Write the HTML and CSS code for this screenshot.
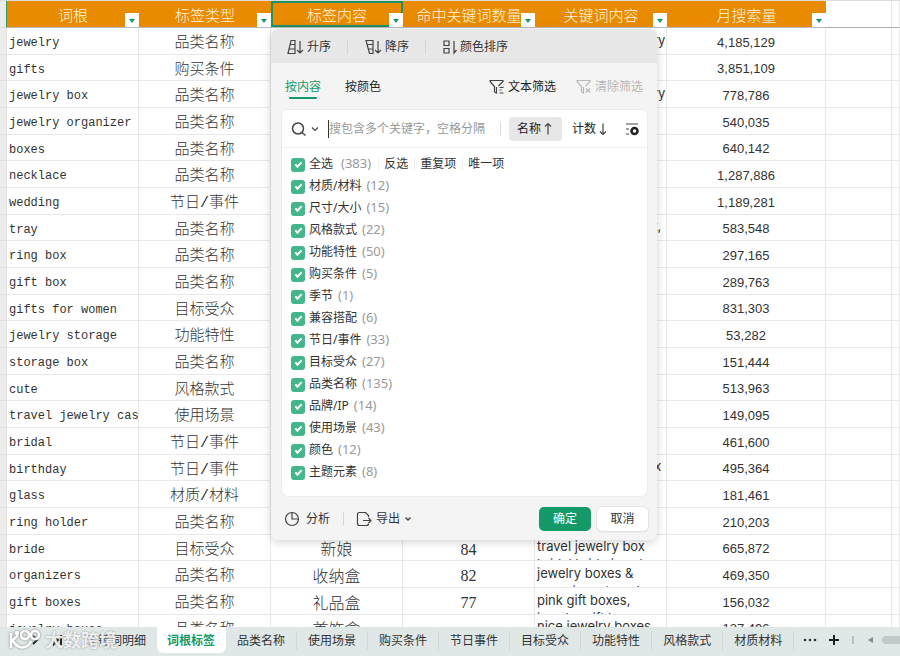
FILE: index.html
```html
<!DOCTYPE html>
<html lang="zh-CN">
<head>
    <meta charset="UTF-8">
    <meta name="viewport" content="width=device-width, initial-scale=1.0">
    <title>词根标签</title>
    <link rel="stylesheet" href="styles.css">
</head>
<body>
    <svg class="defs" width="0" height="0">
        <symbol id="funnel" viewBox="0 0 16 16">
            <path d="M1 2.5V1.5h13v1L9.5 7M1 2.5L5.5 7.500V13l2 1V8"/>
        </symbol>
    </svg>
    <div class="sheet">
        <table class="grid">
            <colgroup>
                <col class="c-gutter"><col class="c-data"><col class="c-data"><col class="c-data"><col class="c-data"><col class="c-data"><col class="c-volume"><col class="c-blank"><col>
            </colgroup>
            <thead>
                <tr>
                    <td class="gutter"></td>
                    <th>词根<button class="drop" aria-label="筛选词根"></button></th>
                    <th>标签类型<button class="drop" aria-label="筛选标签类型"></button></th>
                    <th class="selected">标签内容<button class="drop" aria-label="筛选标签内容"></button></th>
                    <th>命中关键词数量<button class="drop" aria-label="筛选命中关键词数量"></button></th>
                    <th>关键词内容<button class="drop" aria-label="筛选关键词内容"></button></th>
                    <th>月搜索量<button class="drop" aria-label="筛选月搜索量"></button></th>
                    <td></td>
                    <td></td>
                </tr>
            </thead>
            <tbody>
                <tr><td class="gutter"></td><td class="root">jewelry</td><td>品类名称</td><td></td><td></td><td class="words"><div>birthday gifts jewelry</div></td><td class="num">4,185,129</td><td></td><td></td></tr>
                <tr><td class="gutter"></td><td class="root">gifts</td><td>购买条件</td><td></td><td></td><td></td><td class="num">3,851,109</td><td></td><td></td></tr>
                <tr><td class="gutter"></td><td class="root">jewelry box</td><td>品类名称</td><td></td><td></td><td class="words"><div>birthday gifts jewelry</div></td><td class="num">778,786</td><td></td><td></td></tr>
                <tr><td class="gutter"></td><td class="root">jewelry organizer</td><td>品类名称</td><td></td><td></td><td></td><td class="num">540,035</td><td></td><td></td></tr>
                <tr><td class="gutter"></td><td class="root">boxes</td><td>品类名称</td><td></td><td></td><td></td><td class="num">640,142</td><td></td><td></td></tr>
                <tr><td class="gutter"></td><td class="root">necklace</td><td>品类名称</td><td></td><td></td><td></td><td class="num">1,287,886</td><td></td><td></td></tr>
                <tr><td class="gutter"></td><td class="root">wedding</td><td>节日/事件</td><td></td><td></td><td></td><td class="num">1,189,281</td><td></td><td></td></tr>
                <tr><td class="gutter"></td><td class="root">tray</td><td>品类名称</td><td></td><td></td><td class="words"><div>birthday jewelry set,</div></td><td class="num">583,548</td><td></td><td></td></tr>
                <tr><td class="gutter"></td><td class="root">ring box</td><td>品类名称</td><td></td><td></td><td></td><td class="num">297,165</td><td></td><td></td></tr>
                <tr><td class="gutter"></td><td class="root">gift box</td><td>品类名称</td><td></td><td></td><td></td><td class="num">289,763</td><td></td><td></td></tr>
                <tr><td class="gutter"></td><td class="root">gifts for women</td><td>目标受众</td><td></td><td></td><td></td><td class="num">831,303</td><td></td><td></td></tr>
                <tr><td class="gutter"></td><td class="root">jewelry storage</td><td>功能特性</td><td></td><td></td><td></td><td class="num">53,282</td><td></td><td></td></tr>
                <tr><td class="gutter"></td><td class="root">storage box</td><td>品类名称</td><td></td><td></td><td></td><td class="num">151,444</td><td></td><td></td></tr>
                <tr><td class="gutter"></td><td class="root">cute</td><td>风格款式</td><td></td><td></td><td></td><td class="num">513,963</td><td></td><td></td></tr>
                <tr><td class="gutter"></td><td class="root">travel jewelry case</td><td>使用场景</td><td></td><td></td><td></td><td class="num">149,095</td><td></td><td></td></tr>
                <tr><td class="gutter"></td><td class="root">bridal</td><td>节日/事件</td><td></td><td></td><td></td><td class="num">461,600</td><td></td><td></td></tr>
                <tr><td class="gutter"></td><td class="root">birthday</td><td>节日/事件</td><td></td><td></td><td class="words"><div>birthday jewelry box</div></td><td class="num">495,364</td><td></td><td></td></tr>
                <tr><td class="gutter"></td><td class="root">glass</td><td>材质/材料</td><td></td><td></td><td></td><td class="num">181,461</td><td></td><td></td></tr>
                <tr><td class="gutter"></td><td class="root">ring holder</td><td>品类名称</td><td></td><td></td><td></td><td class="num">210,203</td><td></td><td></td></tr>
                <tr><td class="gutter"></td><td class="root">bride</td><td>目标受众</td><td class="tag">新娘</td><td class="hits">84</td><td class="words"><div>travel jewelry box<br>bridal bride jewel</div></td><td class="num">665,872</td><td></td><td></td></tr>
                <tr><td class="gutter"></td><td class="root">organizers</td><td>品类名称</td><td class="tag">收纳盒</td><td class="hits">82</td><td class="words"><div>jewelry boxes &amp;<br>organizers travel</div></td><td class="num">469,350</td><td></td><td></td></tr>
                <tr><td class="gutter"></td><td class="root">gift boxes</td><td>品类名称</td><td class="tag">礼品盒</td><td class="hits">77</td><td class="words"><div>pink gift boxes,<br>jewelry gift box</div></td><td class="num">156,032</td><td></td><td></td></tr>
                <tr><td class="gutter"></td><td class="root">jewelry boxes</td><td>品类名称</td><td class="tag">首饰盒</td><td class="hits"></td><td class="words"><div>nice jewelry boxes</div></td><td class="num">137,496</td><td></td><td></td></tr>
            </tbody>
        </table>
    </div>

    <form class="panel">
        <div class="sortbar">
            <button type="button" class="tool"><svg width="17" height="16" viewBox="0 0 17 16"><path d="M4 1.500h4v13H1zM3.500 5.500h4.500M2.500 10h5.500M13 2v12M10 11l3 3 3-3"/></svg>升序</button>
            <button type="button" class="tool"><svg width="17" height="16" viewBox="0 0 17 16"><path d="M1 1.500h7v13H4.500zM2 5.500h6M3 10h5M13 2v12M10 11l3 3 3-3"/></svg>降序</button>
            <button type="button" class="tool"><svg width="14" height="16" viewBox="0 0 14 16"><path d="M1 2h5v4.500H1zM1 9.500h5V14H1zM11 2v12l2.500-3"/></svg>颜色排序</button>
        </div>
        <div class="modes">
            <button type="button" class="mode active">按内容</button>
            <button type="button" class="mode">按颜色</button>
            <button type="button" class="textfilter"><svg width="16" height="16"><use href="#funnel"/><path d="M10.500 8.500h4M10.500 11h2M10.500 14h4"/></svg>文本筛选</button>
            <button type="button" class="textfilter" disabled><svg width="16" height="16"><use href="#funnel"/><path d="M10 9.500l4 4M14 9.500l-4 4"/></svg>清除筛选</button>
        </div>
        <div class="card">
            <div class="search">
                <svg class="lens" width="16" height="16" viewBox="0 0 16 16"><circle cx="7" cy="7.500" r="5.500"/><path d="M11 11.500l3.500 3"/></svg>
                <svg class="chev" width="8" height="8" viewBox="0 0 8 8"><path d="M1 2.500l3 3 3-3"/></svg>
                <input type="text" aria-label="搜索" placeholder="搜包含多个关键字，空格分隔">
                <button type="button" class="order on">名称<svg width="8" height="14" viewBox="0 0 8 14"><path d="M4 12.500V1.500M1 4.500l3-3 3 3"/></svg></button>
                <button type="button" class="order">计数<svg width="8" height="14" viewBox="0 0 8 14"><path d="M4 1.500v11M1 9.500l3 3 3-3"/></svg></button>
                <button type="button" class="setup" aria-label="设置"><svg width="14" height="14" viewBox="0 0 14 14"><path d="M1 2h12M1 7h3M1 12h3"/><circle class="cog" cx="9.500" cy="9" r="3"/></svg></button>
            </div>
            <ul class="list">
                <li class="all"><label><input type="checkbox" checked>全选<span>(383)</span></label>
                    <button type="button">反选</button><button type="button">重复项</button><button type="button">唯一项</button></li>
                <li><label><input type="checkbox" checked>材质/材料<span>(12)</span></label></li>
                <li><label><input type="checkbox" checked>尺寸/大小<span>(15)</span></label></li>
                <li><label><input type="checkbox" checked>风格款式<span>(22)</span></label></li>
                <li><label><input type="checkbox" checked>功能特性<span>(50)</span></label></li>
                <li><label><input type="checkbox" checked>购买条件<span>(5)</span></label></li>
                <li><label><input type="checkbox" checked>季节<span>(1)</span></label></li>
                <li><label><input type="checkbox" checked>兼容搭配<span>(6)</span></label></li>
                <li><label><input type="checkbox" checked>节日/事件<span>(33)</span></label></li>
                <li><label><input type="checkbox" checked>目标受众<span>(27)</span></label></li>
                <li><label><input type="checkbox" checked>品类名称<span>(135)</span></label></li>
                <li><label><input type="checkbox" checked>品牌/IP<span>(14)</span></label></li>
                <li><label><input type="checkbox" checked>使用场景<span>(43)</span></label></li>
                <li><label><input type="checkbox" checked>颜色<span>(12)</span></label></li>
                <li><label><input type="checkbox" checked>主题元素<span>(8)</span></label></li>
            </ul>
        </div>
        <div class="actions">
            <button type="button" class="tool"><svg width="16" height="16" viewBox="0 0 16 16"><circle cx="8" cy="8" r="6.500"/><path d="M8 1.500V8h6.500"/></svg>分析</button>
            <button type="button" class="tool"><svg width="16" height="16" viewBox="0 0 16 16"><path d="M12.500 6V4.500l-3-3H3.500q-2 0-2 2v9q0 2 2 2h7q2 0 2-2M7 9.500h8M12.500 7l2.500 2.500-2.500 2.500"/></svg>导出<svg class="chev" width="8" height="8" viewBox="0 0 8 8"><path d="M1.500 2.500L4 5l2.500-2.500"/></svg></button>
            <button type="button" class="ok">确定</button>
            <button type="button" class="cancel">取消</button>
        </div>
    </form>

    <nav class="tabs">
        <div class="steps">
            <button aria-label="下一个"><svg width="8" height="12" viewBox="0 0 8 12"><path d="M2 2l4 4-4 4"/></svg></button>
            <button aria-label="最后一个"><svg width="10" height="12" viewBox="0 0 10 12"><path d="M2 2l4 4-4 4zM9 1v10"/></svg></button>
        </div>
        <a href="#">关键词明细</a>
        <a href="#" class="current">词根标签</a>
        <a href="#">品类名称</a>
        <a href="#">使用场景</a>
        <a href="#">购买条件</a>
        <a href="#">节日事件</a>
        <a href="#">目标受众</a>
        <a href="#">功能特性</a>
        <a href="#">风格款式</a>
        <a href="#">材质材料</a>
        <button class="more" aria-label="更多"><svg width="14" height="12" viewBox="0 0 14 12"><circle cx="2" cy="6" r="1.300"/><circle cx="7" cy="6" r="1.300"/><circle cx="12" cy="6" r="1.300"/></svg></button>
        <button class="add" aria-label="新建"><svg width="12" height="12" viewBox="0 0 12 12"><path d="M6 1v10M1 6h10"/></svg></button>
        <span class="grip"></span>
        <svg class="left" width="6" height="8" viewBox="0 0 6 8"><path d="M6 1v6L1 4z"/></svg>
        <span class="thumb"></span>
    </nav>

    <div class="mark">
        <svg width="34" height="22" viewBox="0 0 34 22">
            <path d="M3 4v15M4 12l6-6M5 12q5 8 12 6 5-2 6-6"/>
            <circle cx="17" cy="6" r="4"/><circle cx="27" cy="6" r="4"/><circle cx="9" cy="4" r="1"/>
        </svg>
        <span>大数跨境</span>
    </div>
</body>
</html>
```
FILE: styles.css
```css
* {
    box-sizing: border-box;
}

body {
    margin: 0;
    height: 100vh;
    display: flex;
    flex-direction: column;
    position: relative;
    overflow: hidden;
    background: #fff;
    color: #333;
    font: 12px/18px "Noto Sans", "Noto Sans CJK SC", sans-serif;
}

button {
    padding: 0;
    border: 0;
    background: none;
    color: inherit;
    font: inherit;
}

svg {
    fill: none;
    stroke: #444;
    stroke-width: 1.2;
    flex: none;
}

.defs {
    position: absolute;
}

/* spreadsheet */
.sheet {
    flex: 1;
    min-height: 0;
    overflow: hidden;
    border-top: 1px solid #ddd;
}

.grid {
    width: 100%;
    table-layout: fixed;
    border-collapse: separate;
    border-spacing: 0;
    font: 300 15px/18px "Liberation Mono", "Noto Sans CJK SC", monospace;
    text-align: center;
}

.c-gutter { width: 7px; }
.c-data { width: 132px; }
.c-volume { width: 159px; }
.c-blank { width: 66px; }

.grid tr {
    height: 27px;
}

.grid tbody tr:nth-child(3n+2) {
    height: 26px;
}

.grid td {
    padding: 6px 0 0;
    border-right: 1px solid #e8e8e8;
    border-bottom: 1px solid #e8e8e8;
    white-space: nowrap;
    overflow: hidden;
}

.grid thead td {
    border-bottom: 1px solid #aaa;
}

.grid th {
    position: relative;
    padding: 7px 0 0;
    background: #e88b00;
    border-bottom: 1px solid #bbb;
    color: #fff3dc;
    font-weight: 300;
    white-space: nowrap;
}

.grid th.selected {
    box-shadow: inset 0 0 0 2px #1f9163;
}

.grid .gutter {
    background: #ececec;
    border-color: #e0e0e0;
}

.grid thead .gutter {
    border-right: 1px solid #2b9c6c;
}

.drop {
    position: absolute;
    right: 0;
    bottom: 0;
    width: 14px;
    height: 14px;
    background: #fff;
}

.drop::after {
    content: "";
    display: block;
    margin: 1px auto 0;
    width: 0;
    border: 3px solid transparent;
    border-top: 4px solid #149a68;
    border-bottom: 0;
}

.grid .root {
    padding: 4px 0 0 2px;
    font-size: 12px;
    text-align: left;
}

.grid .tag,
.grid .hits {
    padding-top: 7px;
    font-size: 16px;
}

.grid .hits {
    padding-top: 4px;
    font-family: "Liberation Serif", serif;
}

.grid .words {
    padding: 0;
}

.grid .words div {
    height: 25px;
    padding: 2px 0 0 2px;
    overflow: hidden;
    font: 13px/18px Inter, sans-serif;
    text-align: left;
}

.grid .num {
    padding-top: 3px;
    font: 13px/18px "Liberation Sans", sans-serif;
}

/* filter panel */
.panel {
    position: absolute;
    left: 271px;
    top: 29px;
    width: 386px;
    background: #f4f4f4;
    border-radius: 8px;
    box-shadow: 0 2px 10px rgba(0, 0, 0, 0.18);
    overflow: hidden;
}

.sortbar {
    display: flex;
    align-items: center;
    height: 34px;
    padding: 2px 0 0 16px;
    background: #e7e7e7;
}

.tool {
    display: flex;
    align-items: center;
    gap: 3px;
}

.tool + .tool::before {
    content: "";
    width: 1px;
    height: 13px;
    margin: 0 14px 0 16px;
    background: #d4d4d4;
}

.modes {
    display: flex;
    align-items: center;
    height: 46px;
    padding: 2px 14px 0 14px;
    gap: 20px;
    color: #222;
}

.mode {
    position: relative;
    margin-right: 4px;
}

.mode.active {
    color: #149a68;
}

.mode.active::after {
    content: "";
    position: absolute;
    left: 4px;
    right: 4px;
    bottom: -3px;
    height: 2px;
    border-radius: 1px;
    background: #149a68;
}

.textfilter {
    display: flex;
    align-items: center;
    gap: 3px;
}

.mode + .textfilter {
    margin-left: auto;
}

.textfilter:disabled {
    color: #b8b8b8;
}

.textfilter:disabled svg {
    stroke: #b8b8b8;
}

.card {
    margin: 0 9px 0 10px;
    background: #fff;
    border: 1px solid #ececec;
    border-radius: 7px;
}

.search {
    display: flex;
    align-items: center;
    height: 38px;
    padding: 0 8px 0 9px;
    border-bottom: 1px solid #eee;
}

.lens {
    stroke-width: 1.5;
}

.search .chev {
    margin: 0 9px 0 4px;
}

.search input {
    flex: 1;
    min-width: 0;
    height: 18px;
    padding: 0;
    border: 0;
    border-left: 1px solid #333;
    outline: 0;
    font: inherit;
}

.search input::placeholder {
    color: #999;
}

.search input + .order::before {
    content: "";
    position: absolute;
    left: -9px;
    top: 5px;
    height: 14px;
    border-left: 1px solid #ddd;
}

.order {
    position: relative;
    display: flex;
    align-items: center;
    gap: 3px;
    height: 24px;
    margin-right: 10px;
    color: #222;
}

.order.on {
    margin-left: 9px;
    padding: 0 10px 0 8px;
    border-radius: 4px;
    background: #e7e7e7;
}

.setup {
    display: flex;
    margin-left: 8px;
}

.setup .cog {
    stroke: #222;
    stroke-width: 2.500;
}

.list {
    margin: 0;
    padding: 5px 9px 13px;
    list-style: none;
}

.list li {
    display: flex;
    align-items: center;
    height: 22px;
}

.list label,
.list button {
    line-height: 22px;
}

.list span {
    margin-left: 5px;
    color: #999;
    font-size: 13px;
    line-height: 18px;
}

.list .all span {
    margin-left: 8px;
}

.list input {
    appearance: none;
    width: 14px;
    height: 14px;
    margin: 0 4px 0 0;
    border-radius: 3px;
    background: #43b78b;
    vertical-align: middle;
}

.list input:checked::after {
    content: "";
    display: block;
    width: 5px;
    height: 2px;
    margin: 4px 0 0 4px;
    border: solid #fff;
    border-width: 0 0 2px 2px;
    transform: rotate(-45deg);
}

.list button {
    display: flex;
    align-items: center;
}

.list button::before {
    content: "";
    width: 1px;
    height: 12px;
    margin: 0 5px 0 6px;
    background: #eee;
}

.list label + button::before {
    margin-left: 7px;
}

.actions {
    display: flex;
    align-items: center;
    height: 43px;
    padding: 0 9px 0 13px;
}

.actions .tool {
    gap: 6px;
}

.actions .tool + .tool::before {
    margin: 0 8px 0 13px;
}

.actions .tool + .tool {
    gap: 4px;
}

.actions .chev {
    stroke-width: 1.5;
}

.ok,
.cancel {
    height: 24px;
    width: 51px;
    border-radius: 5px;
    background: #fff;
    box-shadow: 0 0 0 1px #e4e4e4, 0 1px 1px #ccc;
}

.ok {
    width: 52px;
    margin: 0 6px 0 auto;
    background: #149a68;
    box-shadow: none;
    color: #fff;
}

/* sheet tabs */
.tabs {
    display: flex;
    align-items: center;
    height: 29px;
    padding-bottom: 3px;
    background: #e0e8e7;
    white-space: nowrap;
    overflow: hidden;
}

.steps {
    display: flex;
    gap: 13px;
    width: 75px;
    flex: none;
    padding-left: 31px;
}

.steps svg,
.add svg {
    display: block;
    stroke: #222;
    stroke-width: 2;
}

.tabs a {
    flex: none;
    padding: 1px 11px 0;
    border-right: 1px solid #cfd8d6;
    color: #333;
    text-decoration: none;
}

.steps + a {
    border-right: 0;
}

.tabs .current {
    height: 26px;
    padding: 5px 11px 3px 10px;
    border: 0;
    border-radius: 0 0 6px 6px;
    background: #fff;
    color: #149a68;
    font-weight: 700;
}

.more {
    margin-left: 9px;
}

.more svg {
    display: block;
    fill: #333;
    stroke: none;
}

.add {
    margin-left: 11px;
}

.grip {
    width: 2px;
    height: 8px;
    margin-left: 12px;
    background: #b8bfbe;
}

.left {
    margin: 0 9px 0 13px;
    fill: #888;
    stroke: none;
}

.thumb {
    flex: 1;
    height: 8px;
    border-radius: 4px 0 0 4px;
    background: #c3c9c8;
}

.mark {
    position: absolute;
    left: 8px;
    bottom: 4px;
    display: flex;
    align-items: center;
    gap: 3px;
    color: rgba(255, 255, 255, 0.85);
    font-size: 18px;
    font-weight: 700;
    line-height: 24px;
    text-shadow: 0 0 2px #888;
    pointer-events: none;
}

.mark svg {
    stroke: #fff;
    stroke-width: 2.500;
    filter: drop-shadow(0 0 1px #777);
}
```
